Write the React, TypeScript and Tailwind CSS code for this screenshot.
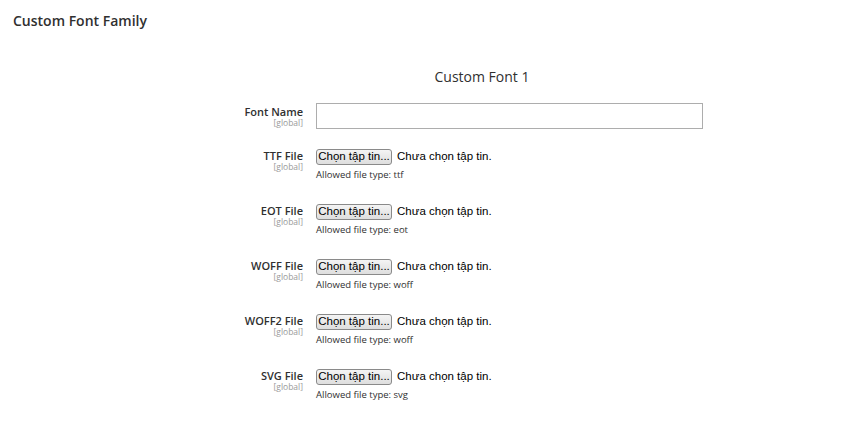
import React from 'react';

const fileRows = [
  { label: 'TTF File', type: 'ttf' },
  { label: 'EOT File', type: 'eot' },
  { label: 'WOFF File', type: 'woff' },
  { label: 'WOFF2 File', type: 'woff' },
  { label: 'SVG File', type: 'svg' },
];

const Label: React.FC<{ text: string }> = ({ text }) => (
  <div className="w-[142px] shrink-0 text-right">
    <div className="text-[11px] leading-[11px] font-semibold text-[#303030]">{text}</div>
    <div className="mt-[1px] text-[8.5px] leading-[9px] text-[#9a9a9a]">[global]</div>
  </div>
);

export default function App() {
  return (
    <div className="w-[854px] h-[432px] bg-white font-['Open_Sans',sans-serif] text-[#303030]">
      <h2 className="pl-[13px] pt-[11px] text-[14px] leading-[19px] font-semibold text-[#303030]">Custom Font Family</h2>

      <div className="ml-[161px] w-[642px] pt-[37px]">
        <div className="text-[14px] leading-[19px] font-medium text-center text-[#303030]">Custom Font 1</div>

        <div className="mt-[17px] flex gap-[13px] h-[45px]">
          <div className="pt-[3px]">
            <Label text="Font Name" />
          </div>
          <input
            type="text"
            className="w-[387px] h-[26px] border border-[#adadad] bg-white outline-none px-2 text-[12px]"
          />
        </div>

        {fileRows.map((r) => (
          <div key={r.label} className="flex gap-[13px] h-[55px]">
            <div className="pt-[2px]">
              <Label text={r.label} />
            </div>
            <div>
              <div className="flex items-center whitespace-nowrap font-['Liberation_Sans',sans-serif] text-[11.5px] text-black">
                <span className="h-[16px] w-[76px] flex items-center justify-center rounded-[3px] border border-[#8a8a8a] bg-gradient-to-b from-[#f4f4f4] to-[#dedede] leading-none">
                  Chọn tập tin...
                </span>
                <span className="ml-[5px]">Chưa chọn tập tin.</span>
              </div>
              <div className="mt-[4px] text-[9.5px] leading-[12px] text-[#303030]">Allowed file type: {r.type}</div>
            </div>
          </div>
        ))}
      </div>
    </div>
  );
}
